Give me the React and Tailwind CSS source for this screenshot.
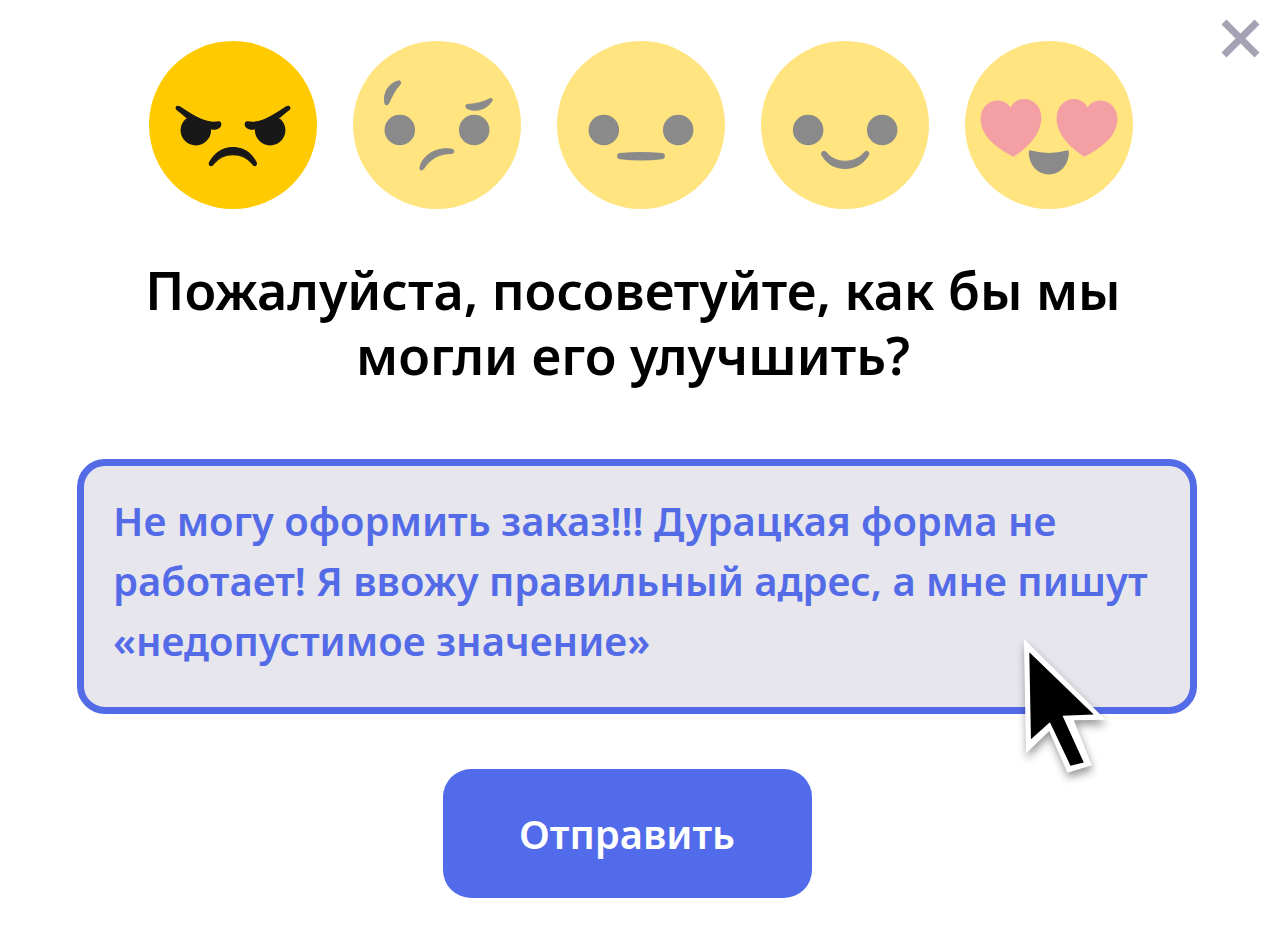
import { useState } from 'react';

const FONT = "font-['Noto_Sans','Open_Sans',sans-serif]";

function AngryFace() {
  return (
    <g transform="translate(-24 -34)" fill="#181818" stroke="#181818" strokeLinejoin="round">
      <path d="M135 268 C126 276 119 288 119 303 A46 46 0 0 0 211 302 L208 280 Z" stroke="none" />
      <path d="M419 268 C428 276 435 288 435 303 A46 46 0 0 1 343 302 L346 280 Z" stroke="none" />
      <path strokeWidth="4" d="M106 235 Q108 228 117 233 C150 255 185 278 217 279 Q228 279 233 278 Q240 277 240 286 C238 298 222 301 207 298 L160 298 L140 267 C128 256 117 247 109 241 Q105 238 106 235Z" />
      <path strokeWidth="4" d="M448 235 Q446 228 437 233 C404 255 369 278 337 279 Q326 279 321 278 Q314 277 314 286 C316 298 332 301 347 298 L394 298 L414 267 C426 256 437 247 445 241 Q449 238 448 235Z" />
      <path strokeWidth="4" d="M206 401 C222 371 246 355 277 355 C308 355 332 371 347 401 Q348 409 342 409 Q339 409 336 404 C321 385 301 376 277 376 C253 376 233 385 218 404 Q215 409 211 409 Q205 409 206 401Z" />
    </g>
  );
}

function DoubtfulFace() {
  return (
    <g transform="translate(-22 -34)" fill="#8a8a8a">
      <circle cx="163" cy="302" r="46" />
      <circle cx="387" cy="302" r="46" />
      <g stroke="#8a8a8a" strokeWidth="3" strokeLinejoin="round">
        <path d="M162 154 Q169 157 165 163 C149 181 138 202 129 223 Q125 229 119 225 C110 191 131 158 162 154Z" />
        <path d="M362 228 Q362 225 368 225 C393 224 415 218 434 208 Q441 206 442 212 C426 242 390 249 365 237 Q361 234 362 228Z" />
        <path d="M223 419 C227 383 269 351 321 360 Q328 363 326 369 Q323 374 315 373 C279 374 253 390 234 420 Q227 427 223 419Z" />
      </g>
    </g>
  );
}

function NeutralFace() {
  return (
    <g transform="translate(-20 -34)" fill="#8a8a8a">
      <circle cx="161" cy="302" r="46" />
      <circle cx="385" cy="302" r="46" />
      <path d="M201 380 Q201 372 210 371 Q273 365 336 371 Q345 372 345 380 Q345 389 336 390 Q273 398 210 390 Q201 389 201 380Z" />
    </g>
  );
}

function SmilingFace() {
  return (
    <g transform="translate(-18 -34)" fill="#8a8a8a">
      <circle cx="160" cy="302" r="46" />
      <circle cx="383" cy="302" r="46" />
      <path
        stroke="#8a8a8a"
        strokeWidth="3"
        strokeLinejoin="round"
        d="M200 375 Q201 366 208 366 Q213 366 216 371 C230 388 250 396 271 396 C293 396 313 388 328 371 Q331 366 336 366 Q343 366 343 375 C329 403 302 418 271 418 C240 418 214 403 200 375Z"
      />
    </g>
  );
}

function LovingFace() {
  return (
    <g transform="translate(-32 -34)">
      <g fill="#f49fa3">
        <path d="M178 383 C130 357 79 322 79 268 C79 214 143 195 169 234 C192 190 262 206 262 266 C262 314 224 353 178 383Z" />
        <path d="M392 383 C346 353 308 314 308 266 C308 206 378 190 401 234 C427 195 491 214 491 268 C491 322 440 357 392 383Z" />
      </g>
      <path fill="#8a8a8a" d="M224 367 Q224 362 230 364 Q285 378 339 364 Q345 362 345 367 C345 409 318 436 285 436 C252 436 224 409 224 367Z" />
    </g>
  );
}

const RATINGS = [
  { id: 'angry', label: 'Ужасно', Face: AngryFace },
  { id: 'doubtful', label: 'Плохо', Face: DoubtfulFace },
  { id: 'neutral', label: 'Нормально', Face: NeutralFace },
  { id: 'smiling', label: 'Хорошо', Face: SmilingFace },
  { id: 'loving', label: 'Отлично', Face: LovingFace },
];

function RatingRow() {
  const [selected, setSelected] = useState('angry');
  return (
    <div className="flex justify-center gap-9 pl-2">
      {RATINGS.map(({ id, label, Face }) => (
        <button
          key={id}
          type="button"
          aria-label={label}
          aria-pressed={selected === id}
          onClick={() => setSelected(id)}
          className="w-[168px] cursor-pointer rounded-full"
        >
          <svg viewBox="0 0 506 506" className="block w-full" aria-hidden="true">
            <circle cx="253" cy="253" r="253" fill={selected === id ? '#ffcb00' : '#ffe47f'} />
            <Face />
          </svg>
        </button>
      ))}
    </div>
  );
}

function Pointer() {
  return (
    <svg
      viewBox="60 40 280 440"
      className="pointer-events-none absolute right-[84px] -bottom-[66px] w-[93px] drop-shadow-[1px_5px_4px_rgba(0,0,0,0.4)]"
      aria-hidden="true"
    >
      <path fill="#fff" d="M72 55 L318 298 L222 300 L276 435 L203 458 L148 332 L78 400Z" />
      <path fill="#000" d="M88 95 L282 282 L188 286 L252 427 L212 437 L150 306 L93 357Z" />
    </svg>
  );
}

export default function App() {
  return (
    <main className={`relative min-h-screen bg-white pt-[41px] pr-[88px] pb-7 pl-[77px] ${FONT}`}>
      <button type="button" aria-label="Закрыть" className="absolute top-4 right-6 size-11 cursor-pointer">
        <svg viewBox="0 0 44 44" className="block size-full" aria-hidden="true">
          <path d="M7 6 L40 39 M40 6 L7 39" stroke="#a5a3b3" strokeWidth="7" />
        </svg>
      </button>

      <form onSubmit={(e) => e.preventDefault()}>
        <RatingRow />

        <h1 className="mt-12 pr-2 text-center text-[52px] leading-[65px] font-semibold text-black">
          <label htmlFor="advice">
            Пожалуйста, посоветуйте, как бы мы
            <br />
            могли его улучшить?
          </label>
        </h1>

        <div className="relative mt-[72px]">
          <textarea
            id="advice"
            rows={3}
            defaultValue="Не могу оформить заказ!!! Дурацкая форма не работает! Я ввожу правильный адрес, а мне пишут «недопустимое значение»"
            className="block h-[255px] w-full resize-none overflow-hidden rounded-[28px] border-[7px] border-[#546be8] bg-[#e7e6ed] px-[29px] py-[25px] text-[40px] leading-[60px] font-semibold text-[#546be8] outline-none"
          />
          <Pointer />
        </div>

        <div className="mt-[55px] flex justify-center pr-5">
          <button
            type="submit"
            className="h-[129px] w-[369px] cursor-pointer rounded-[28px] bg-[#526bea] text-[40px] font-semibold text-white"
          >
            Отправить
          </button>
        </div>
      </form>
    </main>
  );
}
